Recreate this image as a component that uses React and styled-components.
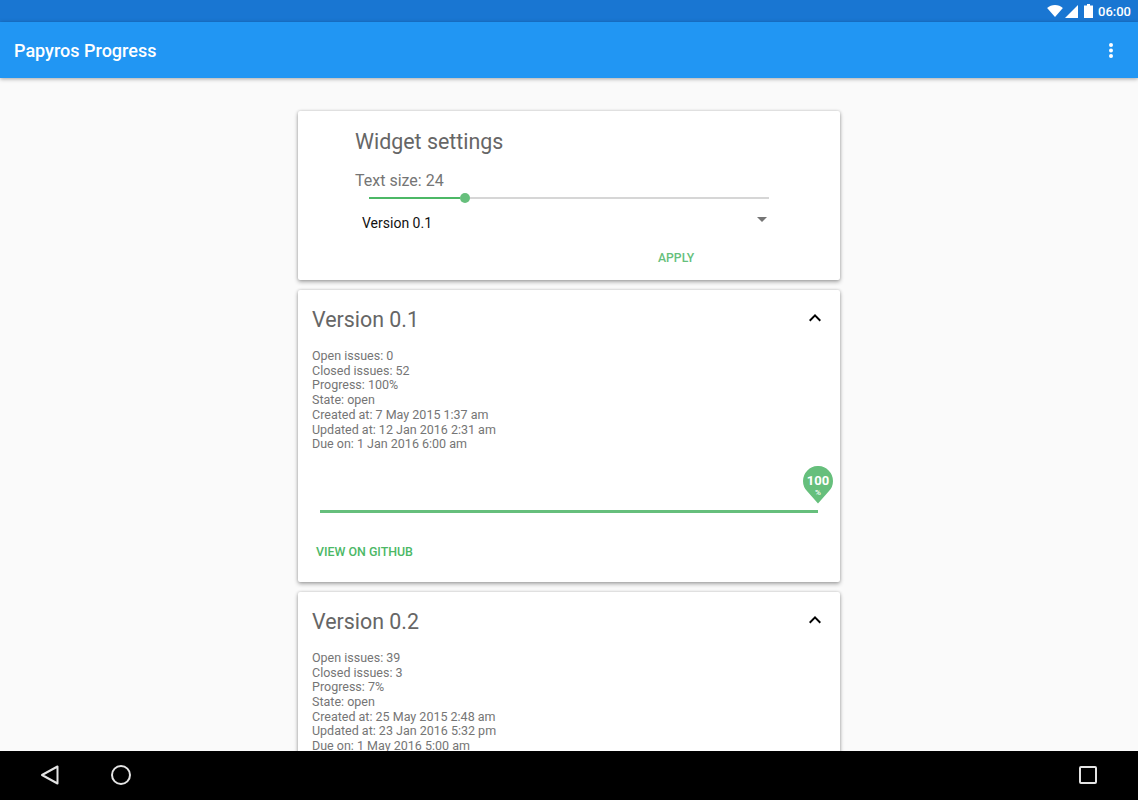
import React from 'react'
import styled, { createGlobalStyle } from 'styled-components'

const GlobalStyle = createGlobalStyle`
    html, body {
        margin: 0;
        padding: 0;
        background: #000;
    }
    * {
        box-sizing: border-box;
    }
    body {
        font-family: Roboto, "Liberation Sans", sans-serif;
    }
`

const milestones = [
    {
        title: 'Version 0.1',
        lines: [
            'Open issues: 0',
            'Closed issues: 52',
            'Progress: 100%',
            'State: open',
            'Created at: 7 May 2015 1:37 am',
            'Updated at: 12 Jan 2016 2:31 am',
            'Due on: 1 Jan 2016 6:00 am',
        ],
        progress: true,
    },
    {
        title: 'Version 0.2',
        lines: [
            'Open issues: 39',
            'Closed issues: 3',
            'Progress: 7%',
            'State: open',
            'Created at: 25 May 2015 2:48 am',
            'Updated at: 23 Jan 2016 5:32 pm',
            'Due on: 1 May 2016 5:00 am',
        ],
    },
]

const Chevron = () => (
    <svg width="24" height="24" viewBox="0 0 24 24">
        <path d="M12 8l-6 6 1.41 1.41L12 10.83l4.59 4.58L18 14z" fill="#000" />
    </svg>
)

const Milestone = ({ item }) => (
    <Card>
        <CardHead>
            <CardTitle>{item.title}</CardTitle>
            <Chevron />
        </CardHead>
        <Details>
            {item.lines.map(line => <div key={line}>{line}</div>)}
        </Details>
        {item.progress && (
            <>
                <ProgressArea>
                    <ProgressLine />
                    <Pin>
                        <svg width="30" height="38" viewBox="0 0 30 38">
                            <path d="M15 37.5L4.4 25.6A15 15 0 1 1 25.6 25.6Z" fill="#66bf7c" />
                        </svg>
                        <PinValue>100</PinValue>
                        <PinUnit>%</PinUnit>
                    </Pin>
                </ProgressArea>
                <GithubLink>VIEW ON GITHUB</GithubLink>
            </>
        )}
    </Card>
)

const App = () => {
    return (
        <Screen>
            <GlobalStyle />
            <StatusBar>
                <svg width="16" height="12" viewBox="0 0 17 13">
                    <path d="M8.5 13L0 3.2C2.2 1.2 5.2 0 8.5 0s6.300 1.200 8.500 3.200z" fill="#fff" />
                </svg>
                <svg width="13" height="13" viewBox="0 0 13 13">
                    <path d="M0 13L13 0v13z" fill="#fff" />
                </svg>
                <BatteryIcon width="9" height="14" viewBox="0 0 9 14">
                    <path d="M3 0h3v1.500h3V14H0V1.500h3z" fill="#fff" />
                </BatteryIcon>
                <Clock>06:00</Clock>
            </StatusBar>
            <Toolbar>
                <AppTitle>Papyros Progress</AppTitle>
                <svg width="4" height="15" viewBox="0 0 4 15">
                    <circle cx="2" cy="2" r="2" fill="#fff" />
                    <circle cx="2" cy="7.500" r="2" fill="#fff" />
                    <circle cx="2" cy="13" r="2" fill="#fff" />
                </svg>
            </Toolbar>
            <Content>
                <SettingsCard>
                    <SettingsTitle>Widget settings</SettingsTitle>
                    <SizeLabel>Text size: 24</SizeLabel>
                    <Slider>
                        <SliderFill />
                        <SliderThumb />
                        <SliderRest />
                    </Slider>
                    <SelectRow>
                        <SelectValue>Version 0.1</SelectValue>
                        <SelectArrow />
                    </SelectRow>
                    <ApplyRow>
                        <GreenButton>APPLY</GreenButton>
                    </ApplyRow>
                </SettingsCard>
                {milestones.map(item => <Milestone key={item.title} item={item} />)}
            </Content>
            <NavBar>
                <NavLeft>
                    <svg width="20" height="20" viewBox="0 0 20 20">
                        <path d="M17.500 1.500V18.500L2 10Z" fill="none" stroke="#e4e4e4" strokeWidth="2" strokeLinejoin="round" />
                    </svg>
                    <svg width="20" height="20" viewBox="0 0 20 20">
                        <circle cx="10" cy="10" r="9" fill="none" stroke="#e4e4e4" strokeWidth="2" />
                    </svg>
                </NavLeft>
                <svg width="18" height="18" viewBox="0 0 18 18">
                    <rect x="1" y="1" width="16" height="16" rx="1" fill="none" stroke="#e4e4e4" strokeWidth="2" />
                </svg>
            </NavBar>
        </Screen>
    )
}

export default App

const Screen = styled.div`
    width: 1138px;
    height: 800px;
    display: flex;
    flex-direction: column;
    overflow: hidden;
    background: #fafafa;
`

const StatusBar = styled.div`
    height: 22px;
    flex: none;
    display: flex;
    align-items: center;
    justify-content: flex-end;
    gap: 2px;
    padding-right: 7px;
    background: #1976d2;
`

const BatteryIcon = styled.svg`
    margin-left: 4px;
`

const Clock = styled.span`
    margin-left: 3px;
    color: #fff;
    font-size: 13px;
    font-weight: 500;
`

const Toolbar = styled.header`
    position: relative;
    z-index: 2;
    height: 56px;
    flex: none;
    display: flex;
    align-items: center;
    justify-content: space-between;
    padding: 0 25px 0 14px;
    background: #2196f3;
    box-shadow: 0 1px 4px rgba(0, 0, 0, 0.35);
`

const AppTitle = styled.h1`
    margin: 0;
    color: #fff;
    font-size: 18px;
    font-weight: 500;
`

const Content = styled.main`
    flex: 1;
    min-height: 0;
    overflow: hidden;
    display: flex;
    flex-direction: column;
    align-items: center;
    gap: 10px;
    padding-top: 33px;
`

const Card = styled.section`
    flex: none;
    width: 542px;
    padding: 14px 14px 0;
    background: #fff;
    border-radius: 2px;
    box-shadow: 0 2px 4px rgba(0, 0, 0, 0.32), 0 0 3px rgba(0, 0, 0, 0.18);
`

const SettingsCard = styled(Card)`
    height: 169px;
    padding: 17px 0 0 57px;
`

const SettingsTitle = styled.h2`
    margin: 0;
    color: #666;
    font-size: 21.400px;
    font-weight: 400;
    line-height: 28px;
`

const SizeLabel = styled.div`
    margin-top: 15px;
    color: #757575;
    font-size: 16px;
    line-height: 20px;
`

const Slider = styled.div`
    display: flex;
    align-items: center;
    width: 400px;
    height: 12px;
    margin: 1px 0 0 14px;
`

const SliderFill = styled.div`
    width: 91px;
    height: 2px;
    background: #4cb866;
`

const SliderThumb = styled.div`
    width: 10px;
    height: 10px;
    flex: none;
    border-radius: 50%;
    background: #66bf7c;
`

const SliderRest = styled.div`
    flex: 1;
    height: 2px;
    background: #d6d6d6;
`

const SelectRow = styled.div`
    display: flex;
    align-items: flex-start;
    justify-content: space-between;
    width: 412px;
    margin-top: 9px;
    padding-left: 7px;
`

const SelectValue = styled.div`
    color: #111;
    font-size: 14px;
    line-height: 20px;
`

const SelectArrow = styled.div`
    width: 0;
    height: 0;
    margin-top: 4px;
    border-left: 5px solid transparent;
    border-right: 5px solid transparent;
    border-top: 5px solid #757575;
`

const ApplyRow = styled.div`
    margin: 14px 0 0 303px;
`

const GreenButton = styled.span`
    color: #66bf7c;
    font-size: 12.200px;
    font-weight: 500;
    line-height: 16px;
`

const CardHead = styled.div`
    display: flex;
    align-items: center;
    justify-content: space-between;
    height: 30px;
    svg {
        margin: 0 -1px 2px 0;
    }
`

const CardTitle = styled.h2`
    margin: 2px 0 0;
    color: #666;
    font-size: 21.400px;
    font-weight: 400;
    line-height: 30px;
`

const Details = styled.div`
    margin-top: 15px;
    color: #757575;
    font-size: 12.500px;
    line-height: 14.700px;
`

const ProgressArea = styled.div`
    position: relative;
    height: 61px;
    margin: 0 0 0 8px;
`

const ProgressLine = styled.div`
    position: absolute;
    left: 0;
    right: 8px;
    bottom: 0;
    height: 3px;
    background: #66bf7c;
`

const Pin = styled.div`
    position: absolute;
    right: -7px;
    top: 14px;
    width: 30px;
    height: 38px;
    color: #fff;
    text-align: center;
    svg {
        display: block;
    }
`

const PinValue = styled.div`
    position: absolute;
    top: 7px;
    left: 0;
    width: 100%;
    font-size: 13px;
    font-weight: 700;
    line-height: 16px;
`

const PinUnit = styled.div`
    position: absolute;
    top: 22px;
    left: 0;
    width: 100%;
    font-size: 8px;
    font-weight: 500;
    line-height: 10px;
`

const GithubLink = styled.div`
    margin: 31px 0 0 4px;
    padding-bottom: 22px;
    color: #4cb866;
    font-size: 12.400px;
    font-weight: 500;
    line-height: 16px;
`

const NavBar = styled.nav`
    position: relative;
    z-index: 2;
    height: 49px;
    flex: none;
    display: flex;
    align-items: center;
    justify-content: space-between;
    padding: 0 41px 2px 40px;
    background: #000;
`

const NavLeft = styled.div`
    display: flex;
    align-items: center;
    gap: 51px;
`
